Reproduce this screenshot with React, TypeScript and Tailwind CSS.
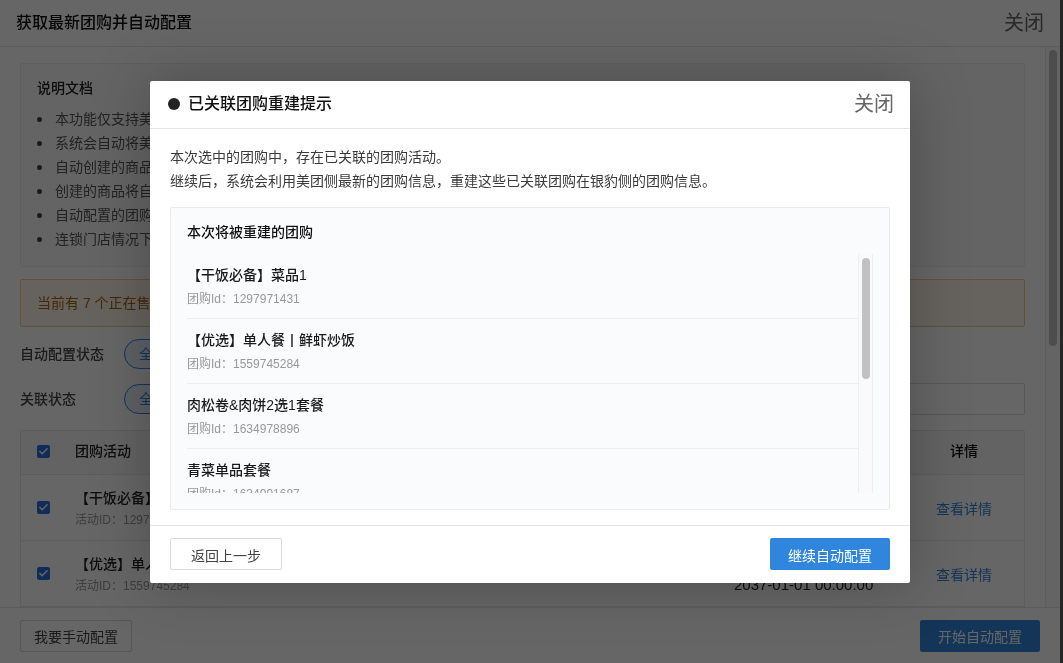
import { Check } from 'lucide-react';

const docLines = [
  '本功能仅支持美团团购',
  '系统会自动将美团团购',
  '自动创建的商品',
  '创建的商品将自动上架',
  '自动配置的团购',
  '连锁门店情况下',
];

const deals = [
  { name: '【干饭必备】菜品1', id: '1297971431' },
  { name: '【优选】单人餐丨鲜虾炒饭', id: '1559745284' },
  { name: '肉松卷&肉饼2选1套餐', id: '1634978896' },
  { name: '青菜单品套餐', id: '1634991687' },
];

const rows = [
  { name: '【干饭必备】菜品1', id: '1297971431' },
  { name: '【优选】单人餐', id: '1559745284' },
];

const Checkbox = () => (
  <div className="w-[13px] h-[13px] rounded-[2px] bg-[#2f6fe0] flex items-center justify-center shrink-0">
    <Check className="w-[11px] h-[11px] text-white" strokeWidth={3} />
  </div>
);

const Pill = ({ label }: { label: string }) => (
  <div className="h-[30px] w-[60px] rounded-full border border-[#3085dd] bg-[#eaf3fc] text-[#3085dd] text-[14px] flex items-center pl-[14px]">
    {label}
  </div>
);

function BackgroundPage() {
  return (
    <div className="h-[663px] flex flex-col bg-white text-[#333]">
      <div className="h-[47px] shrink-0 border-b border-[#e5e5e5] flex items-center justify-between pl-[16px] pr-[16px]">
        <div className="text-[16px] font-medium text-[#111]">获取最新团购并自动配置</div>
        <div className="text-[20px] text-[#666]">关闭</div>
      </div>

      <div className="flex-1 min-h-0 flex">
        <div className="flex-1 min-w-0 overflow-hidden pl-[20px] pr-[20px] pt-[16px]">
          <div className="h-[204px] border border-[#eeeeee] bg-[#fafafa] rounded-[2px] pl-[16px] pt-[14px]">
            <div className="text-[14px] font-medium text-[#222] leading-[20px] mb-[9px]">说明文档</div>
            <ul>
              {docLines.map((line) => (
                <li key={line} className="flex items-center h-[24px] text-[14px] text-[#555]">
                  <span className="w-[5px] h-[5px] rounded-full bg-[#444] mr-[13px]" />
                  {line}
                </li>
              ))}
            </ul>
          </div>

          <div className="h-[48px] mt-[12px] border border-[#f7c98a] bg-[#fef5e8] rounded-[2px] flex items-center pl-[16px] text-[14px] text-[#a8640f]">
            当前有 7 个正在售
          </div>

          <div className="mt-[12px] h-[30px] flex items-center gap-[20px]">
            <div className="w-[84px] text-[14px] font-medium text-[#444]">自动配置状态</div>
            <Pill label="全部" />
          </div>
          <div className="mt-[14px] h-[32px] flex items-center">
            <div className="w-[104px] text-[14px] font-medium text-[#444]">关联状态</div>
            <Pill label="全部" />
            <div className="flex-1 h-[32px] ml-[20px] border border-[#d9d9d9] rounded-[2px]" />
          </div>

          <div className="mt-[15px] border border-[#e5e5e5] rounded-[2px] h-[300px]">
            <div className="h-[44px] pb-[2px] bg-[#f7f8fa] border-b border-[#e8e8e8] flex items-center">
              <div className="w-[54px] pl-[16px]"><Checkbox /></div>
              <div className="flex-1 text-[14px] font-medium text-[#222]">团购活动</div>
              <div className="w-[122px] pl-[2px] text-center text-[14px] font-medium text-[#111]">详情</div>
            </div>
            {rows.map((row) => (
              <div key={row.id} className="h-[66px] border-b border-[#e8e8e8] flex items-center">
                <div className="w-[54px] pl-[16px]"><Checkbox /></div>
                <div className="flex-1 min-w-0 pt-[3px]">
                  <div className="text-[14px] font-medium text-[#222] leading-[20px]">{row.name}</div>
                  <div className="text-[12px] text-[#999] leading-[20px] mt-[2px]">活动ID：{row.id}</div>
                </div>
                <div className="w-[168px] pt-[2px] text-[15px] text-[#222] leading-[20px]">
                  <div>2027-01-01 00:00:00</div>
                  <div>2037-01-01 00:00:00</div>
                </div>
                <div className="w-[122px] pl-[2px] pt-[3px] text-center text-[14px] text-[#3085dd]">查看详情</div>
              </div>
            ))}
          </div>
        </div>

        <div className="w-[15px] shrink-0 border-l border-[#e8e8e8] bg-[#fafafa] pl-[3px] pt-[3px]">
          <div className="w-[8px] h-[296px] rounded-full bg-[#c1c1c1]" />
        </div>
      </div>

      <div className="h-[56px] shrink-0 border-t border-[#e5e5e5] bg-white flex items-center justify-between pl-[20px] pr-[20px]">
        <button className="w-[112px] h-[32px] pt-[4px] border border-[#d9d9d9] rounded-[2px] text-[14px] text-[#444]">我要手动配置</button>
        <button className="w-[120px] h-[32px] pt-[4px] rounded-[2px] bg-[#3085dd] text-[14px] text-white">开始自动配置</button>
      </div>
    </div>
  );
}

function RebuildDialog() {
  return (
    <div className="w-[760px] h-[502px] bg-white rounded-[2px] flex flex-col shadow-[0_0_60px_rgba(0,0,0,0.25)]">
      <div className="h-[48px] shrink-0 border-b border-[#e5e5e5] flex items-center justify-between pl-[18px] pr-[16px]">
        <div className="flex items-center gap-[8px]">
          <span className="w-[12px] h-[12px] rounded-full bg-[#222]" />
          <span className="text-[16px] font-medium text-[#111]">已关联团购重建提示</span>
        </div>
        <div className="text-[20px] text-[#666] leading-none">关闭</div>
      </div>

      <div className="flex-1 min-h-0 px-[20px] pt-[16px] flex flex-col">
        <p className="text-[14px] leading-[24px] text-[#3a3a3a]">本次选中的团购中，存在已关联的团购活动。</p>
        <p className="text-[14px] leading-[24px] text-[#3a3a3a]">继续后，系统会利用美团侧最新的团购信息，重建这些已关联团购在银豹侧的团购信息。</p>

        <div className="mt-[14px] h-[303px] border border-[#eaeaea] bg-[#fafbfd] rounded-[2px] pl-[16px] pr-[16px] flex flex-col">
          <div className="h-[46px] pt-[4px] shrink-0 flex items-center text-[14px] font-medium text-[#111]">本次将被重建的团购</div>
          <div className="h-[239px] flex">
            <div className="flex-1 min-w-0 overflow-hidden">
              {deals.map((deal) => (
                <div key={deal.id} className="h-[65px] border-b border-[#eeeeee] pt-[10px]">
                  <div className="text-[14px] font-medium text-[#1a1a1a] leading-[22px]">{deal.name}</div>
                  <div className="text-[12px] text-[#999] leading-[20px] mt-[3px]">团购Id：{deal.id}</div>
                </div>
              ))}
            </div>
            <div className="w-[15px] shrink-0 border-x border-[#eeeeee] bg-[#fafafa] pl-[3px] pt-[4px]">
              <div className="w-[8px] h-[121px] rounded-full bg-[#c1c1c1]" />
            </div>
          </div>
        </div>
      </div>

      <div className="h-[58px] shrink-0 border-t border-[#e5e5e5] flex items-center justify-between px-[20px]">
        <button className="w-[112px] h-[32px] pt-[4px] border border-[#d9d9d9] rounded-[2px] text-[14px] text-[#444] bg-white">返回上一步</button>
        <button className="w-[120px] h-[32px] pt-[4px] rounded-[2px] bg-[#3085dd] text-[14px] text-white">继续自动配置</button>
      </div>
    </div>
  );
}

export default function App() {
  return (
    <div className="flex h-[663px] overflow-hidden will-change-transform font-['Liberation_Sans','Noto_Sans_CJK_SC',sans-serif]">
      <div className="relative w-[1060px] shrink-0">
        <BackgroundPage />
        <div className="absolute inset-0 bg-black/60 flex items-center justify-center">
          <RebuildDialog />
        </div>
      </div>
      <div className="flex-1 bg-[#262626]" />
    </div>
  );
}
